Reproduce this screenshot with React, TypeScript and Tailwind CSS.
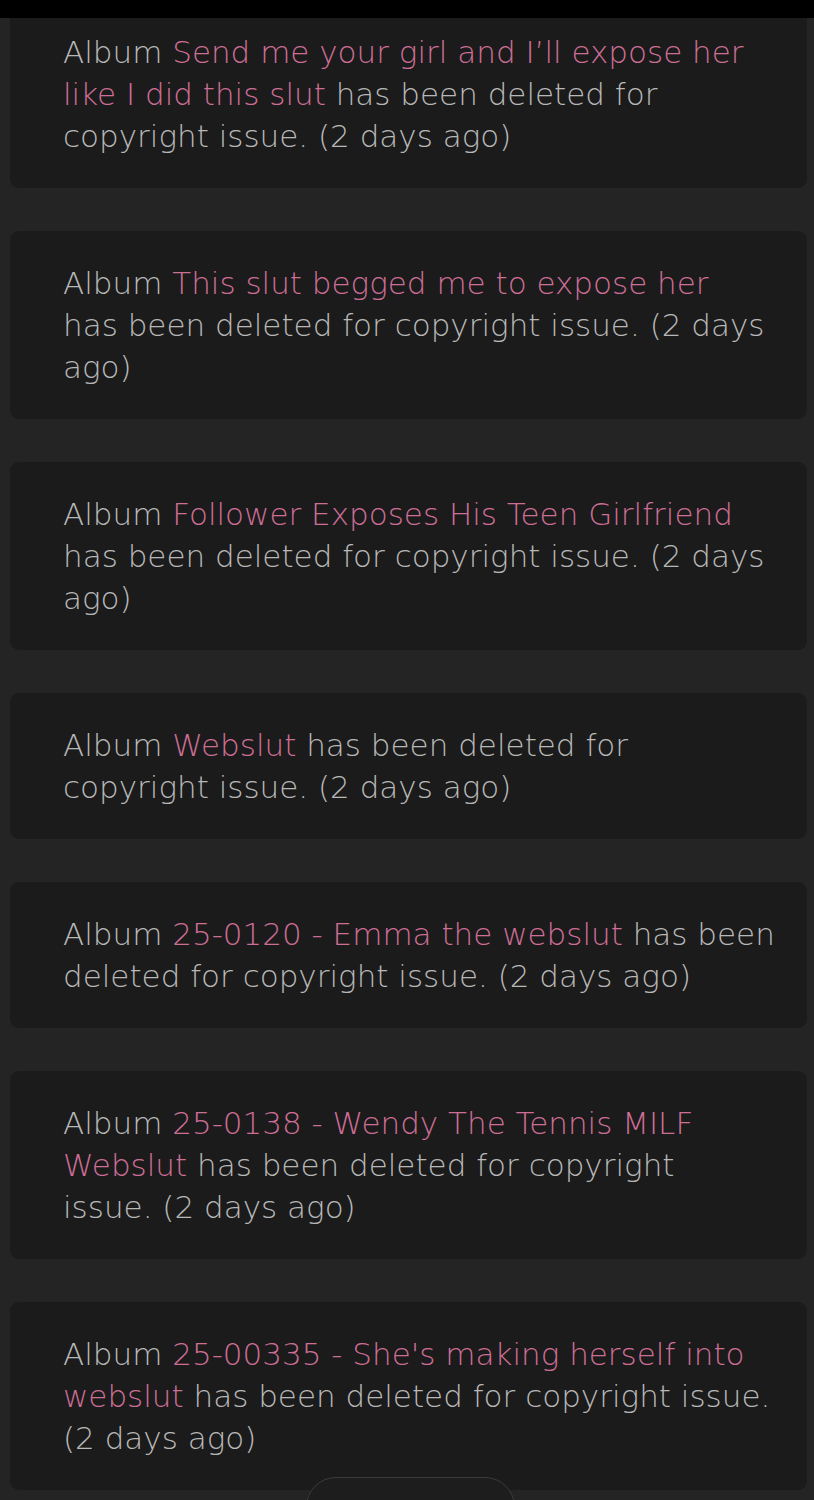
import React from "react";

type Item = { title: string; tail: string[] };

const items: Item[] = [
  { title: "Send me your girl and I’ll expose her like I did this slut", tail: ["has been deleted for copyright issue. (2 days ago)"] },
  { title: "This slut begged me to expose her", tail: ["", "has been deleted for copyright issue. (2 days ago)"] },
  { title: "Follower Exposes His Teen Girlfriend", tail: ["has been deleted for copyright issue. (2 days ago)"] },
  { title: "Webslut", tail: ["has been deleted for copyright issue. (2 days ago)"] },
  { title: "25-0120 - Emma the webslut", tail: ["has been deleted for copyright issue. (2 days ago)"] },
  { title: "25-0138 - Wendy The Tennis MILF Webslut", tail: ["has been deleted for copyright", "issue. (2 days ago)"] },
  { title: "25-00335 - She's making herself into webslut", tail: ["has been deleted for copyright issue. (2 days ago)"] },
];

export default function App() {
  return (
    <div className="relative h-[1500px] w-full overflow-hidden bg-[#242424] font-['DejaVu_Sans',sans-serif]">
      <div className="absolute left-0 right-0 top-0 z-10 h-[18px] bg-black" />
      <div className="flex flex-col gap-[43px] pl-[10px] pr-[7px]">
        {items.map((it, i) => (
          <div
            key={i}
            className="rounded-[9px] bg-[#1b1b1b] pb-[31px] pl-[53px] pr-[30px] pt-[31px] text-[31px] font-extralight leading-[42px] text-[#b8b8b8]"
          >
            Album <span className="text-[#cd6e96]">{it.title}</span>{" "}
            {it.tail.map((t, j) => (
              <React.Fragment key={j}>
                {j > 0 && <br />}
                {t}
              </React.Fragment>
            ))}
          </div>
        ))}
      </div>
      <div className="absolute left-[306px] top-[1477px] h-[60px] w-[209px] rounded-t-[30px] border-[1.5px] border-[#3b3b3b] bg-[#1d1d1d]" />
    </div>
  );
}
